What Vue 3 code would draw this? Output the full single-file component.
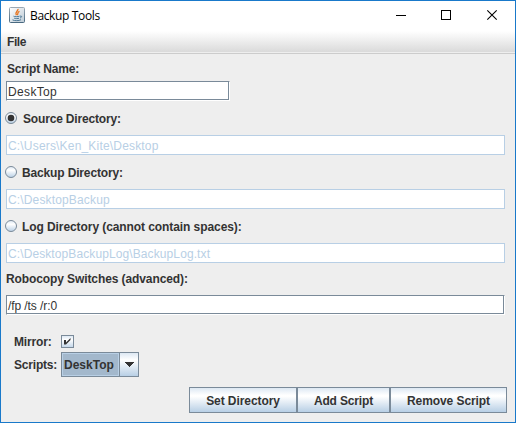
<script setup>
import { ref } from 'vue'

const scriptName = ref('DeskTop')
const selected = ref('source')
const directories = [
  { id: 'source', label: 'Source Directory:', path: 'C:\\Users\\Ken_Kite\\Desktop' },
  { id: 'backup', label: 'Backup Directory:', path: 'C:\\DesktopBackup' },
  { id: 'log', label: 'Log Directory (cannot contain spaces):', path: 'C:\\DesktopBackupLog\\BackupLog.txt' },
]
const switches = ref('/fp /ts /r:0')
const mirror = ref(true)
</script>

<template>
  <div class="window">
    <header class="titlebar">
      <svg class="java" width="16" height="16" viewBox="0 0 16 16">
        <defs>
          <linearGradient id="tile" x1="0" y1="0" x2="0" y2="1">
            <stop offset="0" stop-color="#9aa8b4" />
            <stop offset="1" stop-color="#496980" />
          </linearGradient>
          <linearGradient id="face" x1="0" y1="0" x2="1" y2="1">
            <stop offset="0" stop-color="#fff" />
            <stop offset="1" stop-color="#bccad5" />
          </linearGradient>
        </defs>
        <rect x=".5" y=".5" width="15" height="15" rx="1" fill="url(#face)" stroke="url(#tile)" />
        <path d="M9 1.800C9.600 4 5.500 4.600 7.300 8.300M10.500 4.300C7.600 5.500 9.800 6.300 8.200 8.200" fill="none" stroke="#e8731c" stroke-width="1.300" />
        <path d="M4.500 9.200C5.500 9.900 9 9.800 10.500 9.200M5.200 11.200C6.500 11.800 9 11.700 10 11.200M3.500 12.900C5.500 14 10 13.900 12 12.700M11 9.200C13.300 8.500 13 10.500 11 11" fill="none" stroke="#4d7896" />
      </svg>
      <span class="caption">Backup Tools</span>
      <svg class="controls" width="138" height="30" viewBox="0 0 138 30" shape-rendering="crispEdges">
        <path d="M20 14.500h10" stroke="#000" />
        <rect x="65.500" y="9.500" width="9" height="9" fill="none" stroke="#000" />
        <path d="M111.300 9.300l9.400 9.400M120.700 9.300l-9.400 9.400" stroke="#000" stroke-width="1.100" shape-rendering="auto" />
      </svg>
    </header>
    <nav class="menubar"><span class="file">File</span></nav>
    <main class="form">
      <label class="heading name-heading"><span class="t-name">Script Name:</span></label>
      <div class="field name">{{ scriptName }}</div>
      <section v-for="d in directories" :key="d.id" class="directory">
        <div class="choice" @click="selected = d.id">
          <svg width="13" height="13" viewBox="0 0 13 13">
            <defs>
              <linearGradient :id="'radio-' + d.id" x1="0" y1="0" x2="0" y2="1">
                <stop offset="0" stop-color="#dde8f3" />
                <stop offset=".35" stop-color="#fff" />
                <stop offset="1" stop-color="#b8cfe5" />
              </linearGradient>
            </defs>
            <circle cx="6" cy="6" r="5.500" :fill="`url(#radio-${d.id})`" stroke="#7a8a99" />
            <circle v-if="selected === d.id" cx="6" cy="6" r="3.300" fill="#333" />
          </svg>
          <span :class="'t-' + d.id">{{ d.label }}</span>
        </div>
        <div class="field disabled"><span :class="'p-' + d.id">{{ d.path }}</span></div>
      </section>
      <label class="heading switch-heading"><span class="t-switch">Robocopy Switches (advanced):</span></label>
      <div class="field"><span class="p-switch">{{ switches }}</span></div>
      <div class="options">
        <span class="t-mirror">Mirror:</span>
        <div class="check" @click="mirror = !mirror">
          <svg v-if="mirror" width="11" height="11" viewBox="0 0 11 11">
            <path d="M2 4h2v2.500L8.500 2V4L4 8.500H2z" fill="#333" />
          </svg>
        </div>
        <span class="t-scripts">Scripts:</span>
        <div class="combo">
          <div class="value"><span>DeskTop</span></div>
          <div class="arrow"><svg width="10" height="5" viewBox="0 0 10 5" shape-rendering="crispEdges"><path d="M0 0h10L5 5z" fill="#333" /></svg></div>
        </div>
      </div>
      <footer class="actions">
        <button class="set"><span>Set Directory</span></button>
        <button class="add"><span>Add Script</span></button>
        <button class="remove"><span>Remove Script</span></button>
      </footer>
    </main>
  </div>
</template>

<style>
body { margin: 0; overflow: hidden; }
</style>

<style scoped>
.window { box-sizing: border-box; width: 516px; height: 423px; border: 1px solid #1979ca; background: #eee; color: #333; font: bold 12px/16px "Liberation Sans", Arial, sans-serif; display: flex; flex-direction: column; }
span { white-space: pre; }
.titlebar { height: 30px; background: #fff; display: flex; align-items: flex-start; }
.java { margin: 6px 0 0 8px; }
.caption { margin: 6px 0 0 5px; font: 12px/17px "Open Sans", "Noto Sans", sans-serif; letter-spacing: -.35px; color: #000; }
.controls { margin-left: auto; margin-right: 1px; }
.menubar { box-sizing: border-box; height: 23px; padding: 3px 6px; background: linear-gradient(#fff, #dadada 21px, #eee 21px, #eee 22px, #ccc 22px); }
.file { letter-spacing: -.4px; }
.form { display: flex; flex-direction: column; padding-left: 5px; }
.heading { display: flex; align-items: center; }
.name-heading { height: 27px; padding: 2px 0 0 1px; box-sizing: border-box; }
.switch-heading { height: 32px; }
.t-name { letter-spacing: -.17px; }
.t-source { letter-spacing: -.17px; }
.t-backup { letter-spacing: -.15px; margin-left: -1px; }
.t-log { letter-spacing: -.08px; margin-left: -1px; }
.t-switch { letter-spacing: -.1px; }
.t-mirror { letter-spacing: -.15px; }
.t-scripts { letter-spacing: -.2px; }
.field { box-sizing: border-box; width: 499px; height: 20px; padding: 2px 1px; border: 1px solid #7a8a99; border-bottom-color: #fff; border-right-color: #fff; box-shadow: inset -1px -1px #7a8a99; background: #fff; font-weight: normal; }
.field.name { width: 224px; letter-spacing: .35px; }
.p-source { letter-spacing: .18px; }
.p-backup { letter-spacing: .15px; }
.p-log { letter-spacing: .1px; }
.p-switch { letter-spacing: -.08px; }
.field.disabled { border: 1px solid #b8cfe5; box-shadow: none; color: #b8cfe5; }
.directory { height: 54px; }
.choice { box-sizing: border-box; height: 34px; padding-top: 11px; margin-left: -1px; display: flex; gap: 5px; }
.choice span { margin-top: -1px; }
.options { display: grid; grid-template-columns: 47px 78px; margin: 20px 0 0 8px; row-gap: 4px; height: 42px; grid-template-rows: 13px 25px; }
.options > span { line-height: 15px; }
.options > .t-scripts { line-height: 27px; }
.check { box-sizing: border-box; width: 13px; height: 13px; border: 1px solid #7a8a99; background: linear-gradient(#dde8f3, #fff 35%, #c5d8ea); display: flex; }
.combo { box-sizing: border-box; width: 78px; height: 25px; border: 1px solid #7a8a99; display: flex; }
.value { box-sizing: border-box; width: 57px; border: 1px solid #b8cfe5; background: #a3b8cc; padding-left: 1px; line-height: 23px; }
.arrow { flex: 1; border-left: 1px solid #7a8a99; background: linear-gradient(#dde8f3, #fff 30%, #b8cfe5); display: flex; align-items: center; justify-content: center; }
.actions { display: flex; margin: 10px 0 0 183px; }
button { box-sizing: border-box; height: 26px; padding: 2px 0 0; border: 1px solid #7a8a99; border-radius: 0; background: linear-gradient(#dde8f3, #fff 30%, #fff 35%, #b8cfe5); color: #333; font: inherit; letter-spacing: -.08px; }
.set { width: 108px; }
.add { width: 93px; letter-spacing: -.15px; }
.remove { width: 117px; }
</style>
